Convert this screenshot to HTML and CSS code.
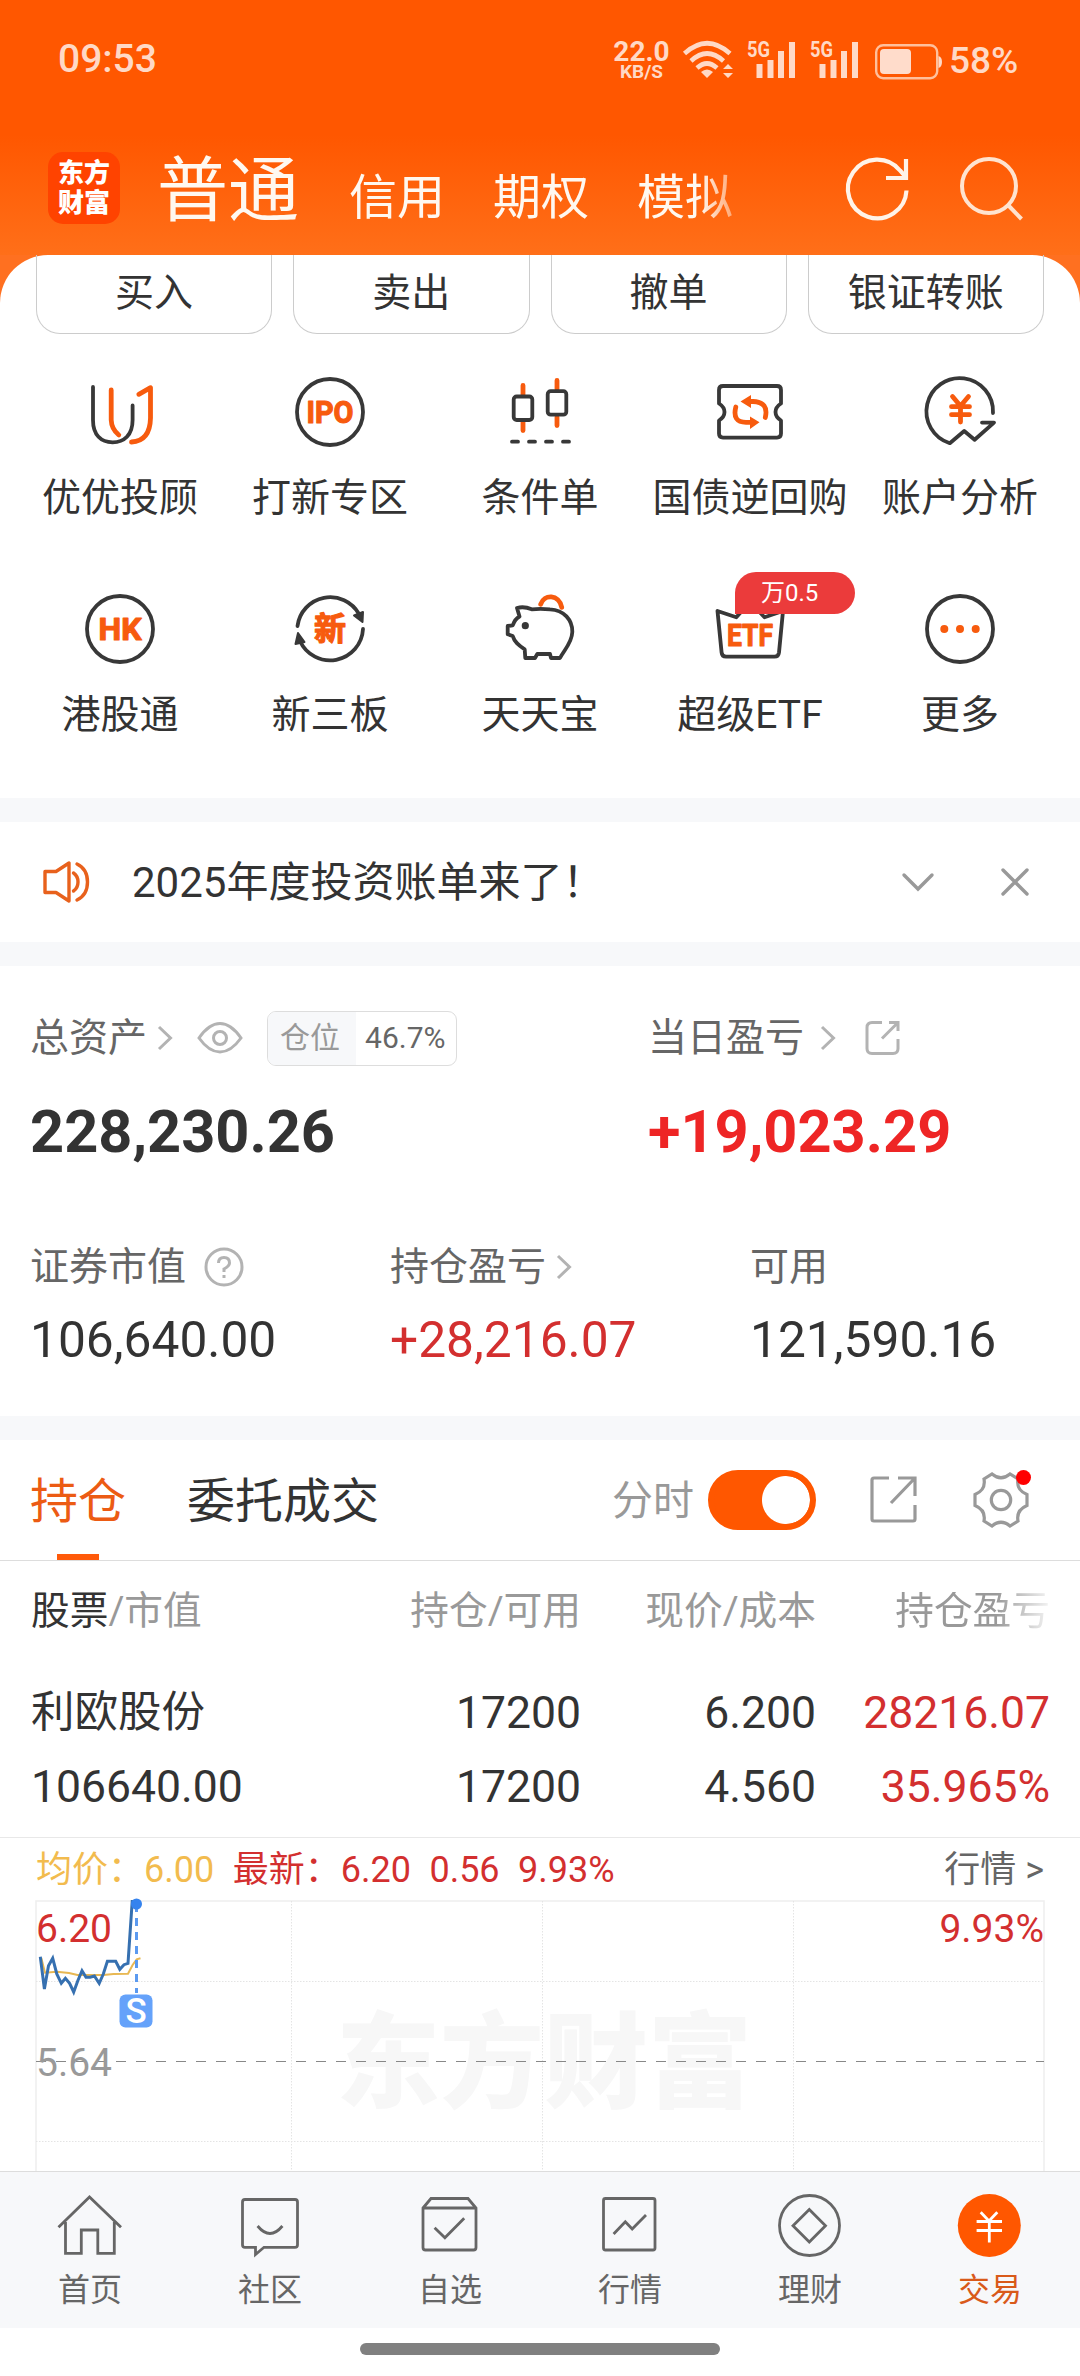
FILE: index.html
```html
<!DOCTYPE html>
<html lang="zh-CN">
<head>
    <meta charset="UTF-8">
    <meta name="viewport" content="width=device-width, initial-scale=1.0">
    <title>交易</title>
    <link rel="stylesheet" href="styles.css">
</head>
<body>
  <header class="top">
    <div class="status">
      <span class="time">09:53</span>
      <div class="net-speed"><b>22.0</b><small>KB/S</small></div>
      <svg class="wifi" width="52" height="40" viewBox="0 0 52 40">
        <g fill="none" stroke="#ffd9c6" stroke-width="4.6">
          <path d="M2.5 13.5Q25 -7 48 13.5"/>
          <path d="M9 21Q25 6 41.500 21"/>
          <path d="M15 28Q25 19 35 28"/>
        </g>
        <path d="M19 32Q25 27 31 32L25 38Z" fill="#ffd9c6"/>
        <path d="M41 29L46 24L51 29ZM41 33H51L46 38Z" fill="#ffd9c6"/>
      </svg>
      <svg class="signal" width="50" height="40" viewBox="0 0 50 40">
        <text x="0" y="16.500" textLength="23" lengthAdjust="spacingAndGlyphs">5G</text>
        <path d="M9.500 24h6v14h-6zM20.500 20h6v18h-6zM31 11h6v27h-6zM42 2h6v36h-6z"/>
      </svg>
      <svg class="signal" width="50" height="40" viewBox="0 0 50 40">
        <text x="0" y="16.500" textLength="23" lengthAdjust="spacingAndGlyphs">5G</text>
        <path d="M9.500 24h6v14h-6zM20.500 20h6v18h-6zM31 11h6v27h-6zM42 2h6v36h-6z"/>
      </svg>
      <svg class="battery" width="67" height="36" viewBox="0 0 67 36">
        <rect x="1.200" y="1.200" width="61" height="33" rx="7" fill="none" stroke="#ffc09c" stroke-width="2.400"/>
        <rect x="5" y="5" width="31" height="25" rx="4" fill="#ffdccb"/>
        <path d="M63.500 12q3.500 1 3.500 6t-3.500 6z" fill="#ffd9c6"/>
      </svg>
      <span class="percent">58%</span>
    </div>
    <nav class="accounts">
      <div class="logo"><span>东方</span><span>财富</span></div>
      <div class="account-tabs">
        <span class="current">普通</span>
        <span>信用</span>
        <span>期权</span>
        <span>模拟</span>
      </div>
      <svg class="refresh" width="66" height="66" viewBox="0 0 66 66" fill="none" stroke="#fff3e8" stroke-width="4.200">
        <path d="M62.500 35.500A29.300 29.300 0 1 1 56 15.500L61 21"/>
        <path d="M62 4V23H42"/>
      </svg>
      <svg class="search" width="66" height="66" viewBox="0 0 66 66" fill="none" stroke="#ffe3cf" stroke-width="4">
        <circle cx="31" cy="31" r="27"/>
        <path d="M50 50L63.500 64"/>
      </svg>
    </nav>
  </header>

  <main class="panel">
    <div class="actions">
      <button class="btn">买入</button>
      <button class="btn">卖出</button>
      <button class="btn">撤单</button>
      <button class="btn">银证转账</button>
    </div>

    <div class="services">
      <div class="service">
        <svg class="icon" viewBox="0 0 80 80">
          <path d="M13 15V48C13 63 21 70.300 32.600 70.300S52.600 63 52.600 48V33.500"/>
          <path class="hot" d="M31.200 18V48Q31.500 57 38.800 63M58.800 22.300L70.500 15.700V46Q70 69 51.500 70"/>
        </svg>
        <span>优优投顾</span>
      </div>
      <div class="service">
        <svg class="icon" viewBox="0 0 80 80">
          <circle cx="40" cy="40" r="33"/>
          <text x="40" y="51" textLength="47" lengthAdjust="spacingAndGlyphs">IPO</text>
        </svg>
        <span>打新专区</span>
      </div>
      <div class="service">
        <svg class="icon" viewBox="0 0 80 80">
          <path class="hot" d="M23 13.500V23M23 50V58.500M57 8.500V17M57 45V53.500"/>
          <rect x="13.700" y="24.500" width="18.600" height="23.500" rx="3"/>
          <rect x="47.700" y="19.200" width="18.600" height="23.500" rx="3"/>
          <path d="M12 69.700H18M29 69.700H35M46 69.700H52M63 69.700H69"/>
        </svg>
        <span>条件单</span>
      </div>
      <div class="service">
        <svg class="icon" viewBox="0 0 80 80">
          <path d="M13 14H67Q71 14 71 18V31.500Q65.500 35 65.500 40T71 48.500V61.600Q71 65.600 67 65.600H13Q9 65.600 9 61.600V48.500Q14.500 45 14.500 40T9 31.500V18Q9 14 13 14Z"/>
          <path class="hot" d="M25.800 35Q22 50.300 36 50.300H42M37 29.500H43Q59 30 55.300 45.500"/>
          <path class="fill" d="M30.500 29.500L41 23V36ZM49.500 50.300L40 44.500V57Z"/>
        </svg>
        <span>国债逆回购</span>
      </div>
      <div class="service">
        <svg class="icon" viewBox="0 0 80 80">
          <path d="M73 41A33.300 33.300 0 1 0 29.800 71.200L44.200 59L54.600 67.700L74 50.600H62"/>
          <path class="hot" d="M32.500 24.500L40.500 34L48.500 24.500M31.500 34.700H49.500M31.500 42.700H49.500M40.500 34V50"/>
        </svg>
        <span>账户分析</span>
      </div>
      <div class="service">
        <svg class="icon" viewBox="0 0 80 80">
          <circle cx="40" cy="40" r="33"/>
          <text x="40" y="51" textLength="43" lengthAdjust="spacingAndGlyphs">HK</text>
        </svg>
        <span>港股通</span>
      </div>
      <div class="service">
        <svg class="icon" viewBox="0 0 80 80">
          <path d="M7.500 37A33 33 0 0 1 69 25M73 40A33 33 0 0 1 10 52"/>
          <path class="dark" d="M64 26.500L73 23L72.500 33ZM8 44L14.500 53L5.500 55Z"/>
          <text class="cjk" x="40" y="51">新</text>
        </svg>
        <span>新三板</span>
      </div>
      <div class="service">
        <svg class="icon" viewBox="0 0 80 80">
          <path class="hot" d="M40.700 15.300C44 5 59 5 61.700 18.300"/>
          <path d="M17 19Q24 17 31.700 20.300Q40 19.500 50 20.300C64 21 72.500 31 72.300 43C72 54 64 61 60 69H51L50 65H37.300L35 69H25.300L24.700 60.300C18 56 14.500 53 12.700 47L7.700 45.300V37L12.700 36.300Q15 30 19.500 27.500Z"/>
          <circle class="dark" cx="25.300" cy="36.700" r="2.600"/>
        </svg>
        <span>天天宝</span>
      </div>
      <div class="service">
        <svg class="icon" viewBox="0 0 80 80">
          <path d="M7.500 22L26.300 28.300L40 13L54.500 28.300L73 22L69 63.500Q68.500 67.700 64.500 67.700H16Q12 67.700 11.600 63.500Z"/>
          <text x="40" y="57" textLength="46" lengthAdjust="spacingAndGlyphs">ETF</text>
        </svg>
        <span>超级ETF</span>
        <em class="badge">万0.5</em>
      </div>
      <div class="service">
        <svg class="icon" viewBox="0 0 80 80">
          <circle cx="40" cy="40" r="33"/>
          <path class="fill" d="M20.300 40a4 4 0 1 0 8 0a4 4 0 1 0 -8 0M36 40a4 4 0 1 0 8 0a4 4 0 1 0 -8 0M51.700 40a4 4 0 1 0 8 0a4 4 0 1 0 -8 0"/>
        </svg>
        <span>更多</span>
      </div>
    </div>
  </main>

  <section class="notice">
    <svg width="48" height="44" viewBox="0 0 48 44" fill="none" stroke="#e8611c" stroke-width="3.400" stroke-linejoin="round" stroke-linecap="round">
      <path d="M3 11.500H14L27 3V41L14 32.500H3Z"/>
      <path d="M31.500 13Q36 16 36 22T31.500 31M35 4Q45.500 9 45.500 22T35 40"/>
    </svg>
    <span class="notice-text">2025年度投资账单来了！</span>
    <svg class="down" width="34" height="34" viewBox="0 0 34 34"><path d="M3 10L17 24L31 10"/></svg>
    <svg class="close" width="34" height="34" viewBox="0 0 34 34"><path d="M5 5L29 29M29 5L5 29"/></svg>
  </section>

  <section class="assets">
    <div class="asset total">
      <div class="label">
        总资产
        <svg class="chevron" width="16" height="26" viewBox="0 0 16 26"><path d="M2 2L13.500 13L2 24"/></svg>
        <svg class="eye" width="46" height="34" viewBox="0 0 46 34"><path d="M2 17Q12 2.500 23 2.500T44 17Q34 31 23 31T2 17Z"/><circle cx="23" cy="17" r="6.500"/></svg>
        <span class="position"><i>仓位</i><b>46.7%</b></span>
      </div>
      <div class="big">228,230.26</div>
    </div>
    <div class="asset today">
      <div class="label">
        当日盈亏
        <svg class="chevron far" width="16" height="26" viewBox="0 0 16 26"><path d="M2 2L13.500 13L2 24"/></svg>
        <svg class="share" width="36" height="36" viewBox="0 0 36 36"><path d="M17 2.500H7Q2 2.500 2 7.500V28.500Q2 33.500 7 33.500H28Q33 33.500 33 28.500V19M24 2.500H33V11M33 2.500L17 18.500"/></svg>
      </div>
      <div class="big red">+19,023.29</div>
    </div>
    <div class="asset">
      <div class="label">
        证券市值
        <svg class="help" width="40" height="40" viewBox="0 0 40 40"><circle cx="20" cy="20" r="18"/><path d="M14.500 16Q14.500 10.500 20 10.500T25.500 16Q25.500 19 20 22V25M20 28V31"/></svg>
      </div>
      <div class="value">106,640.00</div>
    </div>
    <div class="asset">
      <div class="label">
        持仓盈亏
        <svg class="chevron" width="16" height="26" viewBox="0 0 16 26"><path d="M2 2L13.500 13L2 24"/></svg>
      </div>
      <div class="value red">+28,216.07</div>
    </div>
    <div class="asset">
      <div class="label">可用</div>
      <div class="value">121,590.16</div>
    </div>
  </section>

  <section class="holdings">
    <div class="tabs">
      <span class="tab active">持仓</span>
      <span class="tab">委托成交</span>
      <span class="minute">分时</span>
      <span class="switch"></span>
      <svg class="export" width="48" height="48" viewBox="0 0 48 48"><path d="M19 2H4Q2 2 2 4V43Q2 45 4 45H43Q45 45 45 43V29M28 2H45V20M45 2L21 27"/></svg>
      <span class="settings">
        <svg width="56" height="56" viewBox="0 0 56 56">
          <path d="M19 2Q28 9.500 37 2L45 7Q43 18 54 22.500V33.500Q43 38 45 49L37 54Q28 46.500 19 54L11 49Q13 38 2 33.500V22.500Q13 18 11 7Z"/>
          <circle cx="28" cy="28" r="9.700"/>
        </svg>
      </span>
    </div>
    <div class="row head">
      <span><b>股票</b>/市值</span>
      <span>持仓/可用</span>
      <span>现价/成本</span>
      <span class="fade">持仓盈亏</span>
    </div>
    <div class="row first">
      <span class="name">利欧股份</span>
      <span>17200</span>
      <span>6.200</span>
      <span class="red">28216.07</span>
    </div>
    <div class="row second">
      <span>106640.00</span>
      <span>17200</span>
      <span>4.560</span>
      <span class="red">35.965%</span>
    </div>
    <div class="quote">
      <span class="avg">均价：6.00</span>
      <span class="red">最新：6.20</span>
      <span class="red">0.56</span>
      <span class="red">9.93%</span>
      <span class="more">行情 &gt;</span>
    </div>
    <svg class="chart" width="1080" height="270" viewBox="0 0 1080 270">
      <text class="watermark" x="544" y="199" text-anchor="middle">东方财富</text>
      <path class="frame" d="M36 270V0H1044V270"/>
      <path class="dots" d="M36 80.500H1044M36 240.500H1044M291.500 0V270M542.500 0V270M793.500 0V270"/>
      <path class="middle" d="M36 160.500H1044"/>
      <path class="avg-line" d="M41.300 57L45 71.700L56.800 70.700L69 72L77.500 74H103.300L113.600 73L128 72.700L132.600 64L136.700 58.300L140.500 57.300"/>
      <path class="price-line" d="M40.300 55.700L44.400 88L48.500 64.700L52.700 57.300L56.800 73L61.300 82.300L65.400 77.300L69.600 82.300L73.700 91L77.800 79.700L82 69.700L86 76.300H90.200L94.400 75L99.200 82.300L103.300 73L107.400 60.300H115.700L119.800 68.300L124 63.700L128 62.300L132.200 .5L136.700 .5"/>
      <path class="sell-line" d="M136.500 3V92"/>
      <circle cx="136.500" cy="3" r="5.500" fill="#3583ee"/>
      <rect x="119.500" y="93.500" width="33" height="33" rx="6" fill="#65a2fa"/>
      <text class="sell" x="136" y="122" text-anchor="middle">S</text>
      <text class="tick up" x="36" y="41">6.20</text>
      <text class="tick up" x="1044" y="41" text-anchor="end">9.93%</text>
      <text class="tick" x="36" y="175">5.64</text>
    </svg>
  </section>

  <nav class="bottom">
    <a class="item">
      <svg viewBox="0 0 72 72"><path d="M4.500 38.300L35.500 8L67 38.300M11.500 33V64.300H27.300V41H43.800V64.300H60.300V33"/></svg>
      <span>首页</span>
    </a>
    <a class="item">
      <svg viewBox="0 0 72 72"><path d="M11 10.500H61Q63.500 10.500 63.500 13V56Q63.500 58.300 61 58.300H30L21.500 65.500V58.300H11Q8.500 58.300 8.500 56V13Q8.500 10.500 11 10.500ZM23.600 37Q36 52 48.400 37"/></svg>
      <span>社区</span>
    </a>
    <a class="item">
      <svg viewBox="0 0 72 72"><path d="M9 19L17 9.500H54L62 19V58.500Q62 61 59.500 61H11.500Q9 61 9 58.500ZM9 19H62M20.600 38.700L30.900 48.700L50.200 29.300"/></svg>
      <span>自选</span>
    </a>
    <a class="item">
      <svg viewBox="0 0 72 72"><rect x="9.500" y="9.500" width="51.500" height="51.500" rx="2"/><path d="M19.600 45L31.300 32.700L38.200 40L52 26"/></svg>
      <span>行情</span>
    </a>
    <a class="item">
      <svg viewBox="0 0 72 72"><circle cx="35.500" cy="36.500" r="30"/><path d="M35.300 20.500L51.500 36.700L35.300 53L19 36.700Z"/></svg>
      <span>理财</span>
    </a>
    <a class="item on">
      <svg viewBox="0 0 72 72"><circle cx="35.300" cy="36.500" r="31.500"/><path d="M26.700 23.300L35 32L43.300 23.300M22.600 32.500H48M22.600 41.500H48M35.300 32V53.500"/></svg>
      <span>交易</span>
    </a>
  </nav>
  <div class="home-bar"></div>
</body>
</html>
```
FILE: styles.css
```css
* {
  box-sizing: border-box;
}
body {
  margin: 0;
  width: 1080px;
  height: 2376px;
  overflow: hidden;
  display: flex;
  flex-direction: column;
  background: #fff;
  color: #333;
  font-family: Roboto, "Noto Sans CJK SC", sans-serif;
  line-height: 1;
  white-space: nowrap;
}
svg {
  flex: none;
  display: block;
  overflow: visible;
}
i, em {
  font-style: normal;
}
.red {
  color: #d32f2f;
}

/* orange top */
.top {
  height: 255px;
  background: linear-gradient(#ff5700 0, #ff5700 135px, #ff6f19 255px);
}
.status {
  height: 120px;
  display: flex;
  align-items: center;
  padding-left: 58px;
  color: #ffd9c6;
}
.time {
  width: 555px;
  padding-bottom: 2px;
  font-size: 39px;
  font-weight: 500;
}
.net-speed {
  width: 57px;
  display: flex;
  flex-direction: column;
  align-items: center;
}
.net-speed b {
  font-size: 28px;
  line-height: 24px;
  font-weight: 700;
}
.net-speed small {
  font-size: 19px;
  line-height: 16px;
  font-weight: 700;
}
.wifi {
  margin: 0 13px 0 12px;
}
.signal {
  margin-right: 13px;
  fill: #ffd9c6;
  font-size: 22px;
  font-weight: 700;
}
.battery {
  margin: 3px 7px 0 2px;
}
.percent {
  font-size: 37px;
  font-weight: 500;
}
.accounts {
  height: 135px;
  display: flex;
  align-items: center;
  padding-left: 48px;
}
.logo {
  width: 72px;
  height: 72px;
  border-radius: 15px;
  background: #ff4300;
  color: #fff;
  font-size: 26px;
  font-weight: 900;
  line-height: 30px;
  display: flex;
  flex-direction: column;
  align-items: center;
  justify-content: center;
}
.account-tabs {
  width: 696px;
  height: 100px;
  display: flex;
  align-items: flex-end;
  gap: 48px;
  padding: 0 0 16px 37px;
  color: #fff8f0;
  font-size: 48px;
  -webkit-mask-image: linear-gradient(90deg, #000 580px, transparent 640px);
  mask-image: linear-gradient(90deg, #000 580px, transparent 640px);
}
.account-tabs .current {
  font-size: 71px;
  margin-right: 2px;
  margin-bottom: -4px;
}
.refresh {
  margin-left: 28px;
}
.search {
  margin-left: 48px;
}

/* white panel */
.panel {
  height: 543px;
  background: #fff;
  border-radius: 48px 48px 0 0;
  position: relative;
}
.panel::before {
  content: "";
  position: absolute;
  z-index: -1;
  inset: 0 0 auto 0;
  height: 60px;
  background: #ff7020;
}
.actions {
  display: flex;
  gap: 21px;
  padding: 0 36px;
}
.btn {
  flex: 1 1 0;
  height: 79px;
  padding: 0 0 2px;
  border: 1px solid #ccc;
  border-top: none;
  border-radius: 0 0 24px 24px;
  background: none;
  color: #333;
  font: 39px/1 Roboto, "Noto Sans CJK SC", sans-serif;
}
.services {
  display: grid;
  grid-template-columns: repeat(5, 210px);
  grid-auto-rows: 217px;
  padding: 38px 15px 0;
}
.service {
  position: relative;
  display: flex;
  flex-direction: column;
  align-items: center;
  gap: 27px;
  font-size: 39px;
}
.icon {
  width: 80px;
  height: 80px;
  fill: none;
  stroke: #383838;
  stroke-width: 3.800;
  stroke-linecap: round;
  stroke-linejoin: round;
}
.icon .hot {
  stroke: #f75b0e;
  stroke-width: 4.800;
}
.icon .fill {
  fill: #f75b0e;
  stroke: none;
}
.icon .dark {
  fill: #383838;
  stroke-width: 2;
}
.icon text {
  fill: #f75b0e;
  stroke: #f75b0e;
  stroke-width: 1.200;
  font-size: 32px;
  font-weight: 700;
  text-anchor: middle;
}
.badge {
  position: absolute;
  left: 90px;
  top: -17px;
  width: 120px;
  height: 42px;
  padding-left: 26px;
  border-radius: 21px 21px 21px 0;
  background: #eb3b3b;
  color: #fff;
  font-size: 24px;
  line-height: 42px;
}

/* notice bar */
.notice {
  height: 168px;
  border: solid #f7f8fa;
  border-width: 24px 0;
  display: flex;
  align-items: center;
  padding-left: 42px;
  font-size: 42px;
}
.notice-text {
  width: 769px;
  margin-left: 42px;
  padding-top: 2px;
}
.down, .close {
  fill: none;
  stroke: #999;
  stroke-width: 3.400;
  stroke-linecap: round;
}
.close {
  margin-left: 63px;
}

/* assets */
.assets {
  height: 474px;
  border-bottom: 24px solid #f7f8fa;
  padding: 44px 0 0 30px;
  display: grid;
  grid-template-columns: repeat(6, 180px);
  grid-template-rows: 229px auto;
}
.asset {
  grid-column: span 2;
}
.asset.total {
  grid-column: 1 / span 3;
}
.asset.today {
  grid-column: 4 / span 3;
  padding-left: 78px;
}
.label {
  display: flex;
  align-items: center;
  height: 56px;
  color: #666;
  font-size: 39px;
}
.label svg {
  fill: none;
  stroke: #b3b3b3;
  stroke-width: 3;
}
.chevron {
  margin-left: 10px;
}
.chevron.far {
  margin-left: 16px;
}
.eye {
  margin: 0 24px;
}
.share {
  margin-left: 29px;
}
.help {
  margin-left: 18px;
}
.position {
  display: flex;
  height: 55px;
  border: 1px solid #ddd;
  border-radius: 9px;
  overflow: hidden;
  font-size: 30px;
  line-height: 52px;
}
.position i {
  width: 88px;
  padding-left: 12px;
  background: #f7f8fa;
  color: #999;
}
.position b {
  width: 100px;
  padding-left: 9px;
  font-weight: 400;
}
.big {
  margin-top: 37px;
  font-size: 59.500px;
  font-weight: 700;
}
.big.red {
  color: #ee2525;
}
.value {
  margin-top: 21px;
  font-size: 49.700px;
}

/* holdings */
.tabs {
  height: 121px;
  display: flex;
  align-items: center;
  padding-left: 30px;
  border-bottom: 1px solid #ddd;
  font-size: 48px;
}
.tab {
  height: 120px;
  padding-top: 2px;
  line-height: 120px;
  margin-right: 61px;
}
.tab.active {
  color: #ec5b13;
  background: linear-gradient(#ff5a0a, #ff5a0a) 27px 114px / 42px 6px no-repeat;
}
.minute {
  width: 96px;
  margin-left: 172px;
  padding-top: 2px;
  color: #999;
  font-size: 41px;
}
.switch {
  width: 108px;
  height: 60px;
  border: 6px solid #ff5700;
  border-radius: 30px;
  background: radial-gradient(circle at 72px 24px, #fff 23.500px, #ff5700 24.500px);
}
.export, .settings svg {
  fill: none;
  stroke: #999;
  stroke-width: 3.200;
}
.export {
  margin: 0 55px 0 54px;
}
.settings {
  position: relative;
}
.settings::after {
  content: "";
  position: absolute;
  right: -2px;
  top: -2px;
  width: 15px;
  height: 15px;
  border-radius: 50%;
  background: #f00;
}
.row {
  display: grid;
  grid-template-columns: 315px 235px 235px 234px;
  align-items: center;
  margin-left: 31px;
  text-align: right;
  font-size: 44.500px;
}
.row span:first-child {
  text-align: left;
}
.row.head {
  height: 98px;
  padding-top: 3px;
  color: #999;
  font-size: 38.700px;
}
.row b {
  color: #333;
  font-weight: 400;
}
.fade {
  -webkit-mask-image: linear-gradient(90deg, #000 180px, transparent 240px);
  mask-image: linear-gradient(90deg, #000 180px, transparent 240px);
}
.row.first {
  height: 106px;
  padding-top: 2px;
}
.row .name {
  font-size: 43.500px;
}
.row.second {
  height: 72px;
  padding-bottom: 32px;
}
.quote {
  height: 64px;
  border-top: 1px solid #e8e8e8;
  display: flex;
  align-items: center;
  gap: 18.500px;
  padding: 0 36px;
  font-size: 36px;
}
.avg {
  color: #f2bb4e;
}
.more {
  margin-left: auto;
  color: #666;
}
.chart path {
  fill: none;
}
.frame {
  stroke: #eee;
  stroke-width: 1.500;
}
.dots {
  stroke: #e4e4e4;
  stroke-dasharray: 1.500 1.500;
}
.middle {
  stroke: #888;
  stroke-dasharray: 10 10;
}
.avg-line {
  stroke: #e8b853;
  stroke-width: 2;
}
.price-line {
  stroke: #3670b0;
  stroke-width: 3;
}
.sell-line {
  stroke: #5b9af0;
  stroke-width: 3;
  stroke-dasharray: 8 6;
}
.sell {
  fill: #fff;
  font-size: 35px;
  font-weight: 500;
}
.tick {
  fill: #999;
  font-size: 39px;
}
.tick.up {
  fill: #d32f2f;
}
.watermark {
  fill: #f7f7f7;
  font-size: 104px;
  font-weight: 900;
}

/* bottom bar */
.bottom {
  height: 157px;
  flex: none;
  display: grid;
  grid-template-columns: repeat(6, 1fr);
  border-top: 1px solid #ddd;
  background: #f7f8fa;
}
.item {
  display: flex;
  flex-direction: column;
  align-items: center;
  gap: 13px;
  padding-top: 17px;
  color: #666;
  font-size: 32px;
}
.item svg {
  width: 72px;
  height: 72px;
  fill: none;
  stroke: #666;
  stroke-width: 2.800;
}
.item.on {
  color: #d95a1a;
}
.item.on svg {
  stroke: #fff;
}
.item.on circle {
  fill: #ff5700;
  stroke: none;
}
.home-bar {
  width: 360px;
  height: 12px;
  margin: 15px auto 0;
  border-radius: 6px;
  background: #808080;
}
```
